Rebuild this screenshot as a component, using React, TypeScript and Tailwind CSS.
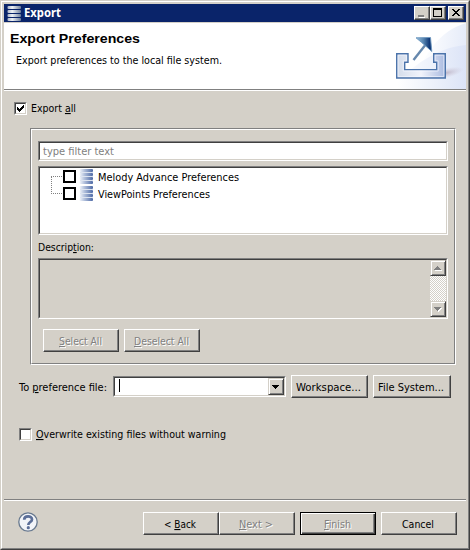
import React from "react";

type Kids = { children?: React.ReactNode };

/** One line of dialog text; the width keeps the Tahoma-like metrics. */
function Label({ children, w, className = "", disabled = false }: Kids & { w: number; className?: string; disabled?: boolean }) {
  return (
    <svg width={w + 2} height="16" className={`block shrink-0 overflow-visible ${className}`}>
      {disabled && (
        <text x="1" y="13" textLength={w} lengthAdjust="spacingAndGlyphs" fill="#fff">
          {children}
        </text>
      )}
      <text x="0" y="12" textLength={w} lengthAdjust="spacingAndGlyphs" fill={disabled ? "#808080" : "currentColor"}>
        {children}
      </text>
    </svg>
  );
}

const U = ({ children }: Kids) => <tspan textDecoration="underline">{children}</tspan>;

function Button({ children, className = "", focused = false }: Kids & { className?: string; focused?: boolean }) {
  return (
    <button
      className={`flex h-[23px] shrink-0 items-center justify-center border bg-[#d4d0c8] pt-px ${
        focused
          ? "border-black shadow-[inset_1px_1px_#fff,inset_-1px_-1px_#404040,inset_-2px_-2px_#808080]"
          : "border-t-white border-l-white border-r-[#404040] border-b-[#404040] shadow-[inset_-1px_-1px_#808080]"
      } ${className}`}
    >
      {children}
    </button>
  );
}

function Sunken({ children, className = "" }: Kids & { className?: string }) {
  return (
    <div className={`border border-t-[#808080] border-l-[#808080] border-r-white border-b-white ${className}`}>
      <div className="flex h-full w-full border border-t-[#404040] border-l-[#404040] border-r-[#d4d0c8] border-b-[#d4d0c8]">
        {children}
      </div>
    </div>
  );
}

function Check({ checked = false }: { checked?: boolean }) {
  return (
    <Sunken className="h-[13px] w-[13px] shrink-0 bg-white">
      {checked && (
        <svg width="9" height="9" shapeRendering="crispEdges">
          <path d="M1 3h1v3h-1zM2 4h1v3h-1zM3 5h1v3h-1zM4 4h1v3h-1zM5 3h1v3h-1zM6 2h1v3h-1zM7 1h1v3h-1z" />
        </svg>
      )}
    </Sunken>
  );
}

function StackIcon({ light = false }: { light?: boolean }) {
  const id = light ? "stack-light" : "stack-blue";
  return (
    <svg width="15" height="15" className="shrink-0">
      <defs>
        <linearGradient id={id}>
          <stop offset="0" stopColor={light ? "#aab4c6" : "#f4f7fb"} />
          <stop offset=".35" stopColor={light ? "#eef1f5" : "#b4c2dd"} />
          <stop offset="1" stopColor={light ? "#71819c" : "#4d69a5"} />
        </linearGradient>
      </defs>
      {[0, 4, 8, 12].map((y) => (
        <g key={y}>
          <rect x="0.5" y={y} width="13.5" height="3" rx="1" fill={`url(#${id})`} />
          {!light && <rect x="1" y={y + 3} width="13" height="1" fill="#dde4f0" />}
        </g>
      ))}
    </svg>
  );
}

function ScrollArrow({ down = false }: { down?: boolean }) {
  return (
    <div className="h-4 w-4 border border-t-[#d4d0c8] border-l-[#d4d0c8] border-r-[#404040] border-b-[#404040] bg-[#d4d0c8] shadow-[inset_1px_1px_#fff,inset_-1px_-1px_#808080]">
      <svg width="14" height="14" shapeRendering="crispEdges">
        {down ? (
          <>
            <path d="M4 6h7v1h-1v1h-1v1h-1v1h-1v-1h-1v-1h-1v-1h-1z" fill="#fff" />
            <path d="M3 5h7v1h-1v1h-1v1h-1v1h-1v-1h-1v-1h-1v-1h-1z" fill="#808080" />
          </>
        ) : (
          <>
            <path d="M4 9h7v1h-7z" fill="#fff" />
            <path d="M6 5h1v1h1v1h1v1h1v1h-7v-1h1v-1h1v-1h1z" fill="#808080" />
          </>
        )}
      </svg>
    </div>
  );
}

function TitleButton({ children }: Kids) {
  return (
    <button className="h-[14px] w-4 border border-t-white border-l-white border-r-[#404040] border-b-[#404040] bg-[#d4d0c8] shadow-[inset_-1px_-1px_#808080]">
      <svg width="14" height="12" shapeRendering="crispEdges">{children}</svg>
    </button>
  );
}

function ExportBanner() {
  return (
    <svg width="86" height="66" viewBox="380 23 86 66" className="shrink-0">
      <defs>
        <linearGradient id="sky" x1="0" y1="0" x2="1" y2=".1">
          <stop offset=".25" stopColor="#fff" />
          <stop offset="1" stopColor="#e6ecf9" />
        </linearGradient>
        <linearGradient id="swoop" x1="0" y1="0" x2="1" y2="0">
          <stop offset=".1" stopColor="#fff" />
          <stop offset="1" stopColor="#dce4f7" />
        </linearGradient>
        <linearGradient id="tray">
          <stop offset="0" stopColor="#d3dcea" />
          <stop offset=".5" stopColor="#f1f3fb" />
          <stop offset="1" stopColor="#a9bae0" />
        </linearGradient>
        <linearGradient id="head">
          <stop offset="0" stopColor="#9cc3de" />
          <stop offset=".5" stopColor="#5280ad" />
          <stop offset=".85" stopColor="#123a78" />
        </linearGradient>
        <radialGradient id="shade">
          <stop offset="0" stopColor="#a99baf" stopOpacity=".65" />
          <stop offset="1" stopColor="#c8bfd0" stopOpacity="0" />
        </radialGradient>
      </defs>
      <path d="M410 89C424 54 439 31 466 23V89Z" fill="url(#sky)" />
      <path d="M390 89C414 65 435 48 466 45V89Z" fill="url(#swoop)" />
      <ellipse cx="446" cy="73" rx="18" ry="5" fill="url(#shade)" transform="rotate(-12 446 73)" />
      <path
        d="M396.7 53.7H408V62.3H404.7V69.6H436.7V62.3H433.7V53.7H445.3V78H396.7Z"
        fill="url(#tray)"
        stroke="#4c74ab"
        strokeWidth="1.4"
      />
      <path d="M398.2 55.2H406.5V60.8H403.2V71.1H438.2V60.8H435.2V55.2H443.8V76.5H398.2Z" fill="none" stroke="#f3f6fd" strokeWidth=".8" opacity=".8" />
      <path d="M413.5 60L426.5 43.5" stroke="#6688ad" strokeWidth="2.4" />
      <path d="M416 37.8L430.5 37.5L431.8 51.5L427.4 47.6L421.3 42.2Z" fill="url(#head)" stroke="#6d97bf" strokeWidth=".9" />
    </svg>
  );
}

function TreeRow({ children }: Kids) {
  return (
    <div className="flex h-[17px] items-center">
      <div className="ml-[11px] h-px w-[11px] bg-[repeating-linear-gradient(90deg,#808080_0_1px,#fff_1px_2px)]" />
      <div className="mr-[3px] ml-px h-[13px] w-[13px] border-2 border-black" />
      <StackIcon />
      <div className="ml-1">{children}</div>
    </div>
  );
}

export default function App() {
  return (
    <div className="h-[550px] w-[470px] border border-t-[#d4d0c8] border-l-[#d4d0c8] border-r-[#404040] border-b-[#404040] bg-[#d4d0c8] font-['DejaVu_Sans_Condensed','DejaVu_Sans',sans-serif] text-[11px] font-stretch-condensed text-black">
      <div className="flex h-full flex-col border border-t-white border-l-white border-r-[#808080] border-b-[#808080] p-[2px]">
        <header className="mb-px flex h-[18px] shrink-0 items-center bg-[#0a246a] pr-0.5 pl-[3px] text-white">
          <StackIcon light />
          <Label w={37} className="ml-[2px] font-['Noto_Sans',sans-serif] text-[11.5px] font-bold">Export</Label>
          <div className="ml-auto flex">
            <TitleButton><path d="M4 10h6v1h-6z" fill="#fff" /><path d="M3 8h6v2h-6z" fill="#808080" /></TitleButton>
            <TitleButton><path d="M2 1h9v9h-9zM3 3v6h7v-6z" fillRule="evenodd" /></TitleButton>
            <div className="w-0.5" />
            <TitleButton>
              <path d="M3 2h2v1h1v1h2v-1h1v-1h2v1h-1v1h-1v1h-1v1h1v1h1v1h1v1h-2v-1h-1v-1h-2v1h-1v1h-2v-1h1v-1h1v-1h1v-1h-1v-1h-1v-1h-1z" />
            </TitleButton>
          </div>
        </header>

        <section className="flex h-[68px] shrink-0 justify-between border-b border-white bg-white shadow-[inset_0_-1px_#808080]">
          <div className="pt-[8px] pl-[6px]">
            <Label w={130} className="font-['Liberation_Sans',sans-serif] text-[13px] font-bold">Export Preferences</Label>
            <Label w={206} className="mt-[5px] ml-[6px]">Export preferences to the local file system.</Label>
          </div>
          <ExportBanner />
        </section>

        <main className="flex h-[408px] shrink-0 flex-col pt-[10px]">
          <div className="ml-[10px] flex h-[14px] items-center gap-1">
            <Check checked />
            <Label w={45}>Export <U>a</U>ll</Label>
          </div>

          <div className="mt-[13px] ml-[26px] h-[237px] w-[426px] border border-r-white border-b-white border-[#808080]">
            <div className="h-full border border-t-white border-l-white border-r-[#808080] border-b-[#808080] px-[6px] pt-[11px]">
              <Sunken className="h-5 bg-white">
                <Label w={71} className="ml-[3px] text-[#808080]">type filter text</Label>
              </Sunken>
              <Sunken className="mt-[5px] h-[69px] bg-white">
                <div className="relative">
                  <div className="absolute top-[9px] left-[11px] h-[18px] w-px bg-[repeating-linear-gradient(180deg,#808080_0_1px,#fff_1px_2px)]" />
                  <TreeRow><Label w={141}>Melody Advance Preferences</Label></TreeRow>
                  <TreeRow><Label w={112}>ViewPoints Preferences</Label></TreeRow>
                </div>
              </Sunken>
              <Label w={56} className="mt-1 mb-[3px]">Descrip<U>t</U>ion:</Label>
              <Sunken className="h-[61px]">
                <div className="ml-auto flex h-full w-4 flex-col justify-between bg-[repeating-conic-gradient(#fff_0_25%,#d4d0c8_0_50%)] bg-[length:2px_2px]">
                  <ScrollArrow />
                  <ScrollArrow down />
                </div>
              </Sunken>
              <div className="mt-[10px] ml-[5px] flex gap-[5px]">
                <Button className="w-[76px]"><Label w={43} disabled><U>S</U>elect All</Label></Button>
                <Button className="w-[76px]"><Label w={55} disabled><U>D</U>eselect All</Label></Button>
              </div>
            </div>
          </div>

          <div className="mt-[10px] ml-[15px] flex h-[23px] items-center">
            <Label w={88} className="mt-px w-[94px]">To <U>p</U>reference file:</Label>
            <Sunken className="mr-[5px] h-[21px] w-[173px] shrink-0 bg-white">
              <div className="mt-px ml-1 h-[13px] w-px bg-black" />
              <div className="ml-auto h-[17px] w-4 border border-t-[#d4d0c8] border-l-[#d4d0c8] border-r-[#404040] border-b-[#404040] bg-[#d4d0c8] shadow-[inset_1px_1px_#fff,inset_-1px_-1px_#808080]">
                <svg width="14" height="15" shapeRendering="crispEdges"><path d="M3 6h7v1h-1v1h-1v1h-1v1h-1v-1h-1v-1h-1v-1h-1z" /></svg>
              </div>
            </Sunken>
            <Button className="mr-[5px] w-[77px]"><Label w={65}>Workspace...</Label></Button>
            <Button className="w-[78px]"><Label w={66}>File System...</Label></Button>
          </div>

          <div className="mt-[28px] ml-[15px] flex h-4 items-center gap-1">
            <Check />
            <Label w={190}><U>O</U>verwrite existing files without warning</Label>
          </div>
        </main>

        <footer className="flex items-start border-t border-[#808080] pt-[12px] shadow-[inset_0_1px_#fff]">
          <svg width="20" height="20" className="mr-[105px] ml-[14px]">
            <circle cx="10" cy="10" r="9.2" fill="#f2f4f8" stroke="#68798f" strokeWidth="1.3" />
            <path d="M6.2 7.8C6.2 3.2 14 3.3 14 7.4C14 10 10.3 10.1 10.3 13" fill="none" stroke="#5c6f98" strokeWidth="2.7" />
            <circle cx="10.3" cy="15.7" r="1.6" fill="#5c6f98" />
          </svg>
          <Button className="w-[76px]"><Label w={32}>&lt; <U>B</U>ack</Label></Button>
          <Button className="mr-[5px] w-[76px]"><Label w={34} disabled><U>N</U>ext &gt;</Label></Button>
          <Button focused className="mr-[5px] w-[76px]"><Label w={27} disabled><U>F</U>inish</Label></Button>
          <Button className="w-[76px]"><Label w={32}>Cancel</Label></Button>
        </footer>
      </div>
    </div>
  );
}
